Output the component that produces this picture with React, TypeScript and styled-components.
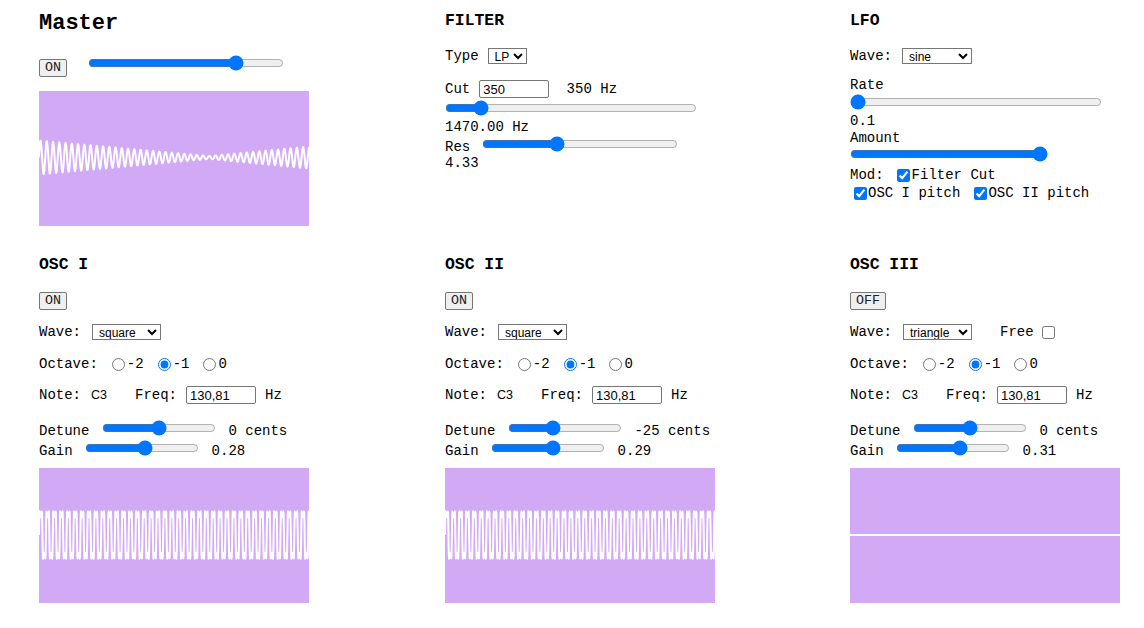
import React from "react";
import styled, { createGlobalStyle } from "styled-components";

const GlobalStyle = createGlobalStyle`
  html, body {
    margin: 0;
    padding: 0;
    background: #ffffff;
  }
  body {
    font-family: "Liberation Mono", "Courier New", monospace;
    font-size: 14px;
    color: #000000;
    overflow: hidden;
  }
`;

const Rack = styled.div`
  display: grid;
  grid-template-columns: 406px 405px 1fr;
  grid-template-rows: 244px auto;
  padding-left: 39px;
  width: 1144px;
  box-sizing: border-box;
`;

const Panel = styled.section`
  display: flex;
  flex-direction: column;
  align-items: flex-start;
`;

const Title = styled.h3<{ $big?: boolean }>`
  margin: 11px 0 0;
  font-size: ${(p) => (p.$big ? "22px" : "16.4px")};
  line-height: ${(p) => (p.$big ? "26px" : "20px")};
  font-weight: bold;
`;

const Row = styled.div<{ $gap?: number; $mt?: number; $h?: number; $pl?: number; $top?: boolean }>`
  display: flex;
  align-items: ${(p) => (p.$top ? "flex-start" : "center")};
  gap: ${(p) => p.$gap ?? 9}px;
  margin-top: ${(p) => p.$mt ?? 0}px;
  padding-left: ${(p) => p.$pl ?? 0}px;
  height: ${(p) => p.$h ?? 20}px;
  white-space: pre;
`;

const Text = styled.div<{ $mt?: number }>`
  margin-top: ${(p) => p.$mt ?? 0}px;
  line-height: 16px;
  white-space: pre;
`;

const Slider = styled.input.attrs({ type: "range" })<{ $w: number; $mt?: number; $lift?: number }>`
  width: ${(p) => p.$w}px;
  height: 16px;
  margin: ${(p) => (p.$lift ? -2 * p.$lift : p.$mt ?? 0)}px 0 0;
  padding: 0;
`;

const Toggle = styled.button<{ $mt?: number }>`
  height: 18px;
  margin-top: ${(p) => p.$mt ?? 0}px;
  padding: 0 5px;
  font-family: "Liberation Mono", "Courier New", monospace;
  font-size: 13.33px;
  font-weight: normal;
  line-height: 16px;
  color: #222222;
  background: #efefef;
  border: 1px solid #767676;
  border-radius: 2px;
`;

const Picker = styled.select<{ $w: number }>`
  width: ${(p) => p.$w}px;
  height: 16px;
  margin: 0;
  padding: 0 0 0 2px;
  font-family: "Liberation Sans", Arial, sans-serif;
  font-size: 12px;
  line-height: 14px;
  color: #000000;
  background: #ffffff;
  border: 1px solid #767676;
  border-radius: 0;
`;

const Field = styled.input<{ $w: number }>`
  width: ${(p) => p.$w}px;
  height: 18px;
  box-sizing: border-box;
  margin: 0;
  padding: 1px 3px;
  font-family: "Liberation Sans", Arial, sans-serif;
  font-size: 13px;
  color: #000000;
  border: 1px solid #767676;
  border-radius: 2px;
`;

const Check = styled.input.attrs({ type: "checkbox" })`
  width: 13px;
  height: 13px;
  margin: 0;
`;

const Radio = styled.input.attrs({ type: "radio" })`
  width: 13px;
  height: 13px;
  margin: 0;
`;

const Option = styled.label<{ $gap?: number; $ml?: number }>`
  display: inline-flex;
  align-items: center;
  gap: ${(p) => p.$gap ?? 1}px;
  margin-left: ${(p) => p.$ml ?? 0}px;
`;

const NoteName = styled.span`
  margin: 0 19px 0 1px;
  font-family: "Liberation Sans", Arial, sans-serif;
  font-size: 12.5px;
`;

const Scope = styled.svg<{ $mt: number }>`
  display: block;
  width: 270px;
  height: 135px;
  margin-top: ${(p) => p.$mt}px;
  background: #d1a9f5;
`;

const W = 270;

const buildPath = (fn: (x: number) => number, step = 0.5) => {
  let d = "";
  for (let x = 0; x <= W + 0.001; x += step) {
    d += (x === 0 ? "M" : "L") + x.toFixed(2) + " " + fn(x).toFixed(2) + " ";
  }
  return d;
};

// beating sum of the two detuned oscillators
const masterWave = buildPath((x) => {
  const env = x < 170 ? 17 - 15.5 * (x / 170) : 1.5 + 9.5 * ((x - 170) / 100);
  return 66.5 - env * Math.sin((2 * Math.PI * x) / 6.25);
}, 0.25);

// band limited square
const squareWave = buildPath((x) => {
  const t = (2 * Math.PI * x) / 6.9;
  let s = 0;
  for (let k = 1; k <= 5; k += 2) s += Math.sin(k * t) / k;
  return 67 - 20 * (4 / Math.PI) * s;
}, 0.2);

const flatWave = `M0 67 L${W} 67`;

type OscProps = {
  name: string;
  on: boolean;
  wave: string;
  free?: boolean;
  detune: number;
  gain: number;
  gainText: string;
  path: string;
};

const Osc = ({ name, on, wave, free, detune, gain, gainText, path }: OscProps) => (
  <Panel>
    <Title>{name}</Title>
    <Toggle $mt={17}>{on ? "ON" : "OFF"}</Toggle>
    <Row $mt={12} $gap={11}>
      <span>Wave:</span>
      <Picker $w={69} defaultValue={wave}>
        <option value="sine">sine</option>
        <option value="square">square</option>
        <option value="sawtooth">sawtooth</option>
        <option value="triangle">triangle</option>
      </Picker>
      {free !== undefined && (
        <Option $gap={8} $ml={17}>
          Free
          <Check defaultChecked={free} />
        </Option>
      )}
    </Row>
    <Row $mt={12} $gap={14}>
      <span>Octave:</span>
      <Option $gap={2}>
        <Radio name={name} />
        -2
      </Option>
      <Option $gap={2}>
        <Radio name={name} defaultChecked />
        -1
      </Option>
      <Option $gap={2}>
        <Radio name={name} />0
      </Option>
    </Row>
    <Row $mt={11} $gap={9}>
      <span>Note:</span>
      <NoteName>C3</NoteName>
      <span>Freq:</span>
      <Field $w={70} defaultValue="130,81" />
      <span>Hz</span>
    </Row>
    <Row $mt={16} $gap={12.5}>
      <span>Detune</span>
      <Slider $w={114} min={-100} max={100} defaultValue={detune} $lift={3.5} />
      <span>{detune} cents</span>
    </Row>
    <Row $gap={12.5}>
      <span>Gain</span>
      <Slider $w={114} min={0} max={100} defaultValue={gain} $lift={3.5} />
      <span>{gainText}</span>
    </Row>
    <Scope $mt={7} viewBox="0 0 270 135">
      <path d={path} fill="none" stroke="#ffffff" strokeWidth={2} strokeLinejoin="round" />
    </Scope>
  </Panel>
);

export default function App() {
  return (
    <>
      <GlobalStyle />
      <Rack>
        <Panel>
          <Title $big>Master</Title>
          <Row $mt={18} $h={22} $gap={21} $top>
            <Toggle $mt={4}>ON</Toggle>
            <Slider $w={196} min={0} max={100} defaultValue={78} />
          </Row>
          <Scope $mt={14} viewBox="0 0 270 135">
            <path d={masterWave} fill="none" stroke="#ffffff" strokeWidth={2} strokeLinejoin="round" />
          </Scope>
        </Panel>

        <Panel>
          <Title>FILTER</Title>
          <Row $mt={15} $gap={9}>
            <span>Type</span>
            <Picker $w={39} defaultValue="LP">
              <option value="LP">LP</option>
              <option value="HP">HP</option>
              <option value="BP">BP</option>
            </Picker>
          </Row>
          <Row $mt={13} $gap={9}>
            <span>Cut</span>
            <Field $w={70} defaultValue="350" />
            <span> 350 Hz</span>
          </Row>
          <Slider $w={252} $mt={1} min={0} max={100} defaultValue={12} />
          <Text $mt={3}>1470.00 Hz</Text>
          <Row $mt={4} $h={16} $gap={12}>
            <span>Res</span>
            <Slider $w={196} min={0} max={100} defaultValue={37} $lift={3} />
          </Row>
          <Text>4.33</Text>
        </Panel>

        <Panel>
          <Title>LFO</Title>
          <Row $mt={15} $gap={10}>
            <span>Wave:</span>
            <Picker $w={70} defaultValue="sine">
              <option value="sine">sine</option>
              <option value="square">square</option>
              <option value="sawtooth">sawtooth</option>
              <option value="triangle">triangle</option>
            </Picker>
          </Row>
          <Text $mt={11}>Rate</Text>
          <Slider $w={252} $mt={1} min={0} max={100} defaultValue={0} />
          <Text $mt={3}>0.1</Text>
          <Text $mt={1}>Amount</Text>
          <Slider $w={198} min={0} max={100} defaultValue={100} />
          <Row $mt={4} $h={18} $gap={13}>
            <span>Mod:</span>
            <Option $gap={2}>
              <Check defaultChecked />
              Filter Cut
            </Option>
          </Row>
          <Row $h={18} $gap={14} $pl={4}>
            <Option>
              <Check defaultChecked />
              OSC I pitch
            </Option>
            <Option>
              <Check defaultChecked />
              OSC II pitch
            </Option>
          </Row>
        </Panel>

        <Osc name="OSC I" on wave="square" detune={0} gain={53} gainText="0.28" path={squareWave} />
        <Osc name="OSC II" on wave="square" detune={-25} gain={55} gainText="0.29" path={squareWave} />
        <Osc name="OSC III" on={false} wave="triangle" free={false} detune={0} gain={57} gainText="0.31" path={flatWave} />
      </Rack>
    </>
  );
}
